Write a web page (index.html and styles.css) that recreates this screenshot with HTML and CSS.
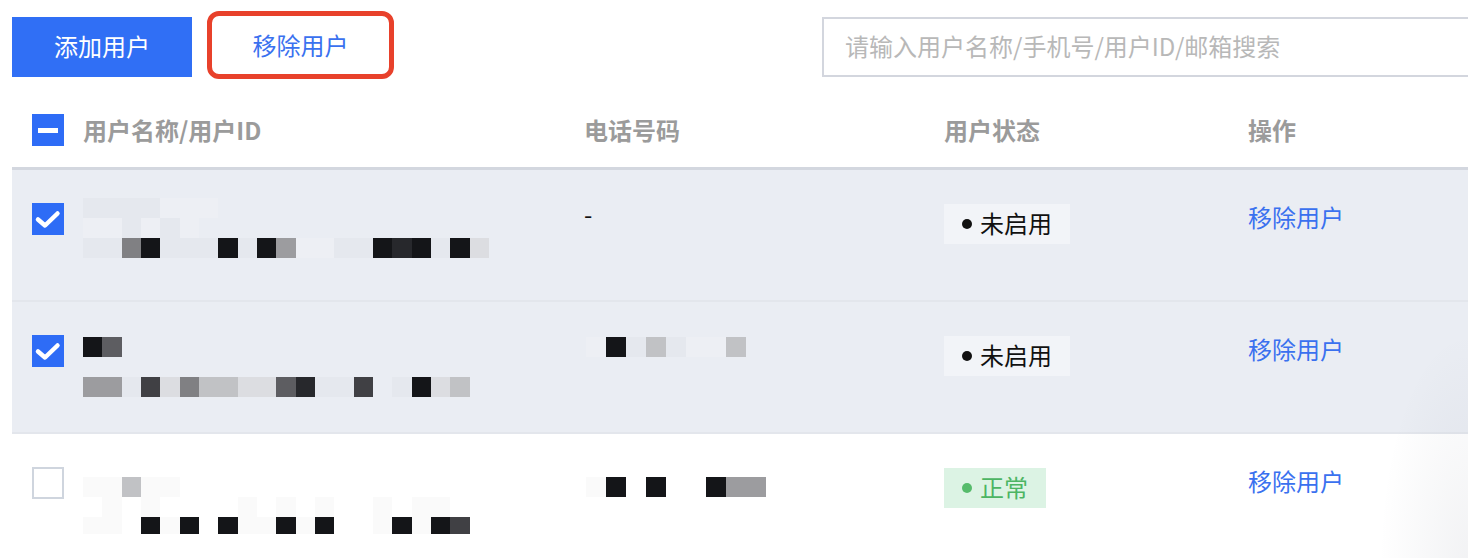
FILE: index.html
```html
<!DOCTYPE html>
<html lang="zh-CN">
<head>
  <meta charset="UTF-8" />
  <meta name="viewport" content="width=device-width, initial-scale=1.0"/>
  <title>用户管理</title>
  <link rel="stylesheet" href="styles.css">
</head>
<body>
  <div class="toolbar">
    <button class="btn-primary" type="button">添加用户</button>
    <button class="btn-mark" type="button">移除用户</button>
    <input class="search" type="text" placeholder="请输入用户名称/手机号/用户ID/邮箱搜索">
  </div>

  <div class="table">
    <div class="thead">
      <div><span class="check"><span class="bar"></span></span></div>
      <div class="th">用户名称/用户ID</div>
      <div class="th">电话号码</div>
      <div class="th">用户状态</div>
      <div class="th">操作</div>
    </div>

    <div class="row selected">
      <div><span class="check"><svg viewBox="0 0 32 32" width="32" height="32"><polyline points="6,16.5 13,22.5 25.5,10.5" /></svg></span></div>
      <div class="mosaic shift-a">
        <div class="mline"><i class="mf"></i><i class="mf"></i><i class="mf"></i><i class="mf"></i><i class="mw"></i><i class="mw"></i><i class="mw"></i></div>
        <div class="mline"><i class="mw"></i><i class="mw"></i><i class="mf"></i><i class="mw"></i><i class="mf"></i><i class="mw"></i></div>
        <div class="mline"><i class="mf"></i><i class="mf"></i><i class="m5"></i><i class="m9"></i><i class="mf"></i><i class="mf"></i><i class="mf"></i><i class="m9"></i><i class="mf"></i><i class="m9"></i><i class="m4"></i><i class="mw"></i><i class="mw"></i><i class="mf"></i><i class="mf"></i><i class="m9"></i><i class="m8"></i><i class="m9"></i><i class="mf"></i><i class="m9"></i><i class="m2"></i></div>
      </div>
      <div class="phone">-</div>
      <div class="status"><span class="tag">未启用</span></div>
      <div><a class="op" href="#">移除用户</a></div>
    </div>

    <div class="row selected">
      <div><span class="check"><svg viewBox="0 0 32 32" width="32" height="32"><polyline points="6,16.5 13,22.5 25.5,10.5" /></svg></span></div>
      <div class="mosaic shift-b">
        <div class="mline"><i class="m9"></i><i class="m6"></i></div>
        <div class="mline"></div>
        <div class="mline"><i class="m4"></i><i class="m4"></i><i class="mf"></i><i class="m7"></i><i class="m2"></i><i class="m5"></i><i class="m3"></i><i class="m3"></i><i class="m2"></i><i class="m2"></i><i class="m6"></i><i class="m8"></i><i class="mf"></i><i class="mf"></i><i class="m7"></i><i></i><i class="mf"></i><i class="m9"></i><i class="m2"></i><i class="m3"></i></div>
      </div>
      <div class="mosaic wide shift-b">
        <div class="mline"><i class="mw"></i><i class="m9"></i><i class="mf"></i><i class="m3"></i><i class="mf"></i><i class="mw"></i><i class="mw"></i><i class="m3"></i></div>
      </div>
      <div class="status"><span class="tag">未启用</span></div>
      <div><a class="op" href="#">移除用户</a></div>
    </div>

    <div class="row">
      <div><span class="check off"></span></div>
      <div class="mosaic shift-c">
        <div class="mline"><i class="mf"></i><i class="mf"></i><i class="m3"></i><i class="mf"></i><i class="mf"></i></div>
        <div class="mline"><i></i><i class="mf"></i><i></i><i class="mf"></i><i></i><i></i><i></i><i></i><i class="mf"></i><i></i><i class="mf"></i><i></i><i class="mf"></i><i></i><i></i><i class="mf"></i><i></i><i class="mf"></i><i class="mf"></i></div>
        <div class="mline short"><i class="mf"></i><i class="mf"></i><i></i><i class="m9"></i><i class="mf"></i><i class="m9"></i><i></i><i class="m9"></i><i class="mf"></i><i class="mf"></i><i class="m9"></i><i class="mf"></i><i class="m9"></i><i></i><i></i><i class="mf"></i><i class="m9"></i><i class="mf"></i><i class="m9"></i><i class="m7"></i></div>
      </div>
      <div class="mosaic wide shift-c">
        <div class="mline"><i class="mf"></i><i class="m9"></i><i></i><i class="m9"></i><i></i><i></i><i class="m9"></i><i class="m4"></i><i class="m4"></i></div>
      </div>
      <div class="status"><span class="tag ok">正常</span></div>
      <div><a class="op" href="#">移除用户</a></div>
    </div>
  </div>
</body>
</html>
```

FILE: styles.css
```css
* {
  box-sizing: border-box;
}
body {
  margin: 0;
  padding: 11px 0 0 12px;
  width: 1468px;
  height: 558px;
  overflow: hidden;
  background: #fff;
  color: #111;
  font-family: "Noto Sans CJK SC", "Noto Sans", sans-serif;
  font-size: 24px;
}

/* toolbar */
.toolbar {
  display: flex;
  align-items: flex-start;
}
.btn-primary {
  margin-top: 6px;
  width: 180px;
  height: 60px;
  padding: 0 0 3px;
  border: none;
  background: #306ff5;
  color: #fff;
  font: inherit;
}
.btn-mark {
  margin-left: 15px;
  width: 187px;
  height: 68px;
  padding: 0 0 1px;
  border: 5px solid #e8412b;
  border-radius: 12px;
  background: #fff;
  color: #3a71ef;
  font: inherit;
}
.search {
  margin-left: auto;
  margin-top: 6px;
  width: 646px;
  height: 60px;
  padding: 0 0 4px 21px;
  border: 2px solid #d3d6de;
  border-right: none;
  color: #333;
  font: inherit;
  outline: none;
}
.search::placeholder {
  color: #b8b8b8;
}

/* table */
.table {
  position: relative;
}
.table::after {
  content: "";
  position: absolute;
  right: 0;
  top: 250px;
  bottom: 0;
  width: 90px;
  background: radial-gradient(ellipse at 100% 100%, rgba(30, 40, 70, 0.06), rgba(30, 40, 70, 0) 70%);
  pointer-events: none;
}
.thead, .row {
  display: grid;
  grid-template-columns: 51px 501px 360px 304px 1fr;
  padding-left: 20px;
}
.thead {
  align-items: center;
  padding-top: 35px;
  padding-bottom: 21px;
  border-bottom: 3px solid #d3d7df;
}
.th {
  color: #9b9b9b;
  font-weight: 700;
  line-height: 26px;
}
.row {
  align-items: start;
  height: 132px;
  padding-top: 34px;
  border-bottom: 2px solid #e3e6ec;
}
.row:first-of-type {
  height: 133px;
}
.row.selected {
  background: #eaedf3;
}

/* checkbox */
.check {
  display: flex;
  align-items: center;
  justify-content: center;
  width: 32px;
  height: 32px;
  background: #2e6cf6;
}
.row .check {
  margin-top: -1px;
}
.check .bar {
  width: 20px;
  height: 5px;
  background: #fff;
}
.check svg polyline {
  fill: none;
  stroke: #fff;
  stroke-width: 4.5;
  stroke-linecap: round;
  stroke-linejoin: round;
}
.check.off {
  background: #fff;
  border: 2px solid #cfd5de;
}

/* masked data */
.mosaic.shift-a { margin-top: -6px; }
.mosaic.shift-b { margin-top: 1px; }
.mosaic.shift-c { margin-top: 9px; }
.mosaic.wide { margin-left: 2px; }
.mline {
  display: flex;
  height: 20px;
}
.mline i {
  display: block;
  width: 19.33px;
  height: 20px;
}
.mline.short i {
  height: 17px;
}
.mosaic.wide .mline i {
  width: 20px;
}
.mf { background: rgba(0, 0, 0, 0.02); }
.mw { background: rgba(255, 255, 255, 0.15); }
.m2 { background: #dcdde1; }
.m3 { background: #c1c2c5; }
.m4 { background: #9c9c9f; }
.m5 { background: #808083; }
.m6 { background: #5d5d61; }
.m7 { background: #404044; }
.m8 { background: #27282c; }
.m9 { background: #141518; }

.phone {
  line-height: 20px;
}

/* status tag */
.status {
  display: flex;
  align-items: flex-start;
}
.tag {
  display: inline-flex;
  align-items: center;
  gap: 8px;
  height: 40px;
  padding: 0 18px 4px;
  background: #f2f4f8;
  color: #111;
}
.tag::before {
  content: "";
  margin-top: 3px;
  width: 10px;
  height: 10px;
  border-radius: 50%;
  background: #111;
}
.tag.ok {
  background: #dcf3e4;
  color: #4cb563;
}
.tag.ok::before {
  background: #56bb6b;
}

.op {
  display: block;
  color: #3a71ef;
  line-height: 25px;
  text-decoration: none;
}
```
